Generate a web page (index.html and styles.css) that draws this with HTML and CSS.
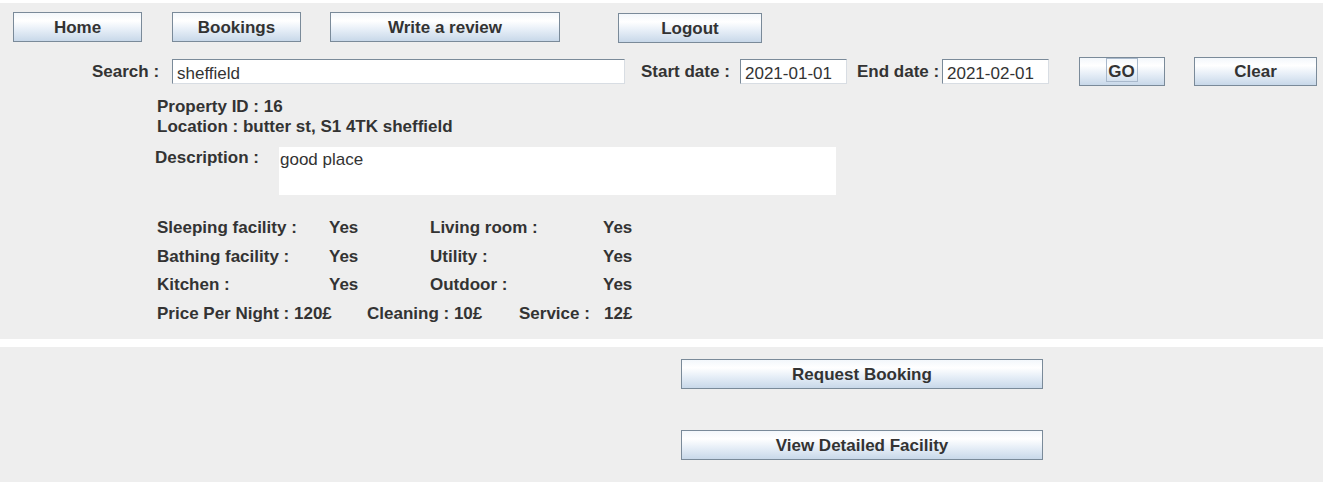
FILE: index.html
```html
<!DOCTYPE html>
<html>
<head>
<meta charset="utf-8">
<link rel="stylesheet" href="styles.css">
</head>
<body>
<div class="top-panel">
  <div class="nav">
    <button class="btn nav-home">Home</button>
    <button class="btn nav-bookings">Bookings</button>
    <button class="btn nav-review">Write a review</button>
    <button class="btn nav-logout">Logout</button>
  </div>
  <div class="search-row">
    <span class="lbl lbl-search">Search :</span>
    <div class="field field-search">sheffield</div>
    <span class="lbl lbl-start">Start date :</span>
    <div class="field field-date">2021-01-01</div>
    <span class="lbl lbl-end">End date :</span>
    <div class="field field-date field-end">2021-02-01</div>
    <button class="btn btn-go"><span class="go-focus">GO</span></button>
    <button class="btn btn-clear">Clear</button>
  </div>
  <div class="info">
    <div class="info-line">Property ID : 16</div>
    <div class="info-line">Location : butter st, S1 4TK sheffield</div>
  </div>
  <div class="desc-row">
    <span class="lbl lbl-desc">Description :</span>
    <div class="desc-box">good place</div>
  </div>
  <div class="facilities">
    <span class="c1">Sleeping facility :</span><span class="c2">Yes</span><span class="c3">Living room :</span><span class="c4">Yes</span>
    <span class="c1">Bathing facility :</span><span class="c2">Yes</span><span class="c3">Utility :</span><span class="c4">Yes</span>
    <span class="c1">Kitchen :</span><span class="c2">Yes</span><span class="c3">Outdoor :</span><span class="c4">Yes</span>
  </div>
  <div class="price-row">
    <span class="p-night">Price Per Night : 120£</span>
    <span class="p-clean">Cleaning : 10£</span>
    <span class="p-service">Service :</span>
    <span class="p-val">12£</span>
  </div>
</div>
<div class="bottom-panel">
  <button class="btn btn-wide">Request Booking</button>
  <button class="btn btn-wide btn-second">View Detailed Facility</button>
</div>
</body>
</html>
```

FILE: styles.css
```css
* { box-sizing: border-box; }
html, body {
  margin: 0;
  padding: 0;
  background: #ffffff;
  width: 1323px;
  height: 482px;
  overflow: hidden;
  font-family: "Liberation Sans", Arial, sans-serif;
  color: #333333;
}
.top-panel {
  margin-top: 3px;
  height: 336px;
  background: #eeeeee;
  padding: 9px 0 0 13px;
  font-weight: bold;
  font-size: 17px;
}
.btn {
  font-family: "Liberation Sans", Arial, sans-serif;
  font-weight: bold;
  font-size: 17px;
  color: #333333;
  height: 30px;
  border: 1px solid #7a8a99;
  background: linear-gradient(to bottom, #f3f7fb 0%, #ffffff 28%, #e6eef7 60%, #c8d8e9 100%);
  padding: 2px 0 0 0;
  margin: 0;
  display: flex;
  align-items: center;
  justify-content: center;
}
.nav {
  display: flex;
  align-items: flex-start;
}
.nav-home { width: 129px; }
.nav-bookings { width: 129px; margin-left: 30px; }
.nav-review { width: 230px; margin-left: 29px; }
.nav-logout { width: 144px; margin-left: 58px; margin-top: 1px; }

.search-row {
  display: flex;
  align-items: center;
  margin-top: 13px;
  height: 30px;
}
.lbl { white-space: nowrap; }
.search-row .lbl { padding-top: 2px; }
.lbl-search { margin-left: 79px; width: 80px; }
.field {
  height: 25px;
  background: #ffffff;
  border: 1px solid #7a8a99;
  border-right-color: #d8dde3;
  border-bottom-color: #d8dde3;
  font-weight: normal;
  font-size: 17px;
  padding: 3px 0 0 4px;
  line-height: 21px;
  color: #333333;
}
.field-search { width: 453px; }
.lbl-start { margin-left: 16px; width: 99px; }
.field-date { width: 107px; }
.lbl-end { margin-left: 10px; width: 85px; }
.btn-go { width: 86px; margin-left: 30px; height: 29px; align-items: flex-start; padding-top: 0; }
.go-focus {
  border: 1px solid #a9b9cc;
  height: 24px;
  padding: 1px 2px 0 1px;
  line-height: 23px;
}
.btn-clear { width: 123px; margin-left: 29px; height: 29px; }

.info {
  margin-left: 144px;
  margin-top: 11px;
  line-height: 20px;
}
.desc-row {
  display: flex;
  margin-top: 10px;
  margin-left: 142px;
}
.lbl-desc { width: 124px; padding-top: 1px; }
.desc-box {
  width: 557px;
  height: 48px;
  background: #ffffff;
  font-weight: normal;
  padding: 3px 0 0 1px;
  line-height: 20px;
}
.facilities {
  display: grid;
  grid-template-columns: 172px 101px 173px auto;
  grid-auto-rows: 28.5px;
  margin-left: 144px;
  margin-top: 19px;
  line-height: 28px;
}
.price-row {
  display: flex;
  margin-left: 144px;
  line-height: 28px;
}
.p-night { width: 210px; }
.p-clean { width: 152px; }
.p-service { width: 85px; }

.bottom-panel {
  margin-top: 8px;
  height: 135px;
  background: #eeeeee;
  padding: 12px 0 0 681px;
}
.btn-wide { width: 362px; }
.btn-second { margin-top: 41px; }
```
